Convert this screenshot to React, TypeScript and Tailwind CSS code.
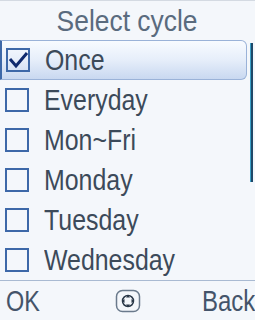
import React from "react";

const items = ["Once", "Everyday", "Mon~Fri", "Monday", "Tuesday", "Wednesday"];

function CheckBox({ checked }: { checked?: boolean }) {
  return (
    <svg width="24" height="24" viewBox="0 0 24 24" className="shrink-0">
      <rect x="1" y="1" width="22" height="22" fill="none" stroke="#3d68a8" strokeWidth="2" />
      {checked && (
        <path d="M4 11 L10 18 L21 5" fill="none" stroke="#0f2a6e" strokeWidth="3" strokeLinejoin="miter" />
      )}
    </svg>
  );
}

function NavIcon() {
  return (
    <svg width="26" height="24" viewBox="0 0 26 24">
      <rect x="1.5" y="1.5" width="23" height="21" rx="6" fill="none" stroke="#6a7a8c" strokeWidth="1.5" />
      <circle cx="13" cy="12" r="5.5" fill="none" stroke="#2a3848" strokeWidth="1.5" />
      <path d="M13 6 l-2 2.5 h4 z M13 18 l-2 -2.5 h4 z M7 12 l2.5 -2 v4 z M19 12 l-2.5 -2 v4 z" fill="#2a3848" />
    </svg>
  );
}

export default function App() {
  return (
    <div
      className="w-[255px] h-[320px] overflow-hidden bg-[#f4f7fb] border-t border-[#d4dae2] flex flex-col text-[#3c4a5a]"
      style={{ fontFamily: '"Liberation Sans", Arial, sans-serif' }}
    >
      {/* Title */}
      <div className="h-[39px] flex items-center justify-center text-[30px] leading-none text-[#5a6b7e]">
        <span className="inline-block scale-x-[0.88]">Select cycle</span>
      </div>

      {/* List + scrollbar */}
      <div className="h-[240px] flex">
        <div className="w-[247px] flex flex-col">
          {items.map((item, i) => (
            <div
              key={item}
              className={
                i === 0
                  ? "h-[40px] flex items-center gap-[15px] pl-[4px] rounded-r-[6px] border border-l-2 border-[#9ab2d8] border-l-[#3d68a8] bg-gradient-to-b from-[#f8fbff] via-[#e6eefa] to-[#c9d8f0]"
                  : "h-[40px] flex items-center gap-[15px] pl-[5px]"
              }
            >
              <CheckBox checked={i === 0} />
              <span className="inline-block text-[30px] leading-none scale-x-[0.83] origin-left">{item}</span>
            </div>
          ))}
        </div>
        <div className="flex-1 pt-[3px] pl-[3px]">
          <div className="w-[3px] h-[139px] bg-[#1e4868] border-l border-[#3aa0c8]" />
        </div>
      </div>

      {/* Softkeys */}
      <div className="flex-1 border-t border-[#a9bad2] flex items-center justify-between pl-[6px] pr-[5px] text-[30px] leading-none text-[#44546a]">
        <span className="inline-block w-[60px] scale-x-[0.78] origin-left">OK</span>
        <NavIcon />
        <span className="inline-block w-[60px] text-right scale-x-[0.8] origin-right">Back</span>
      </div>
    </div>
  );
}
